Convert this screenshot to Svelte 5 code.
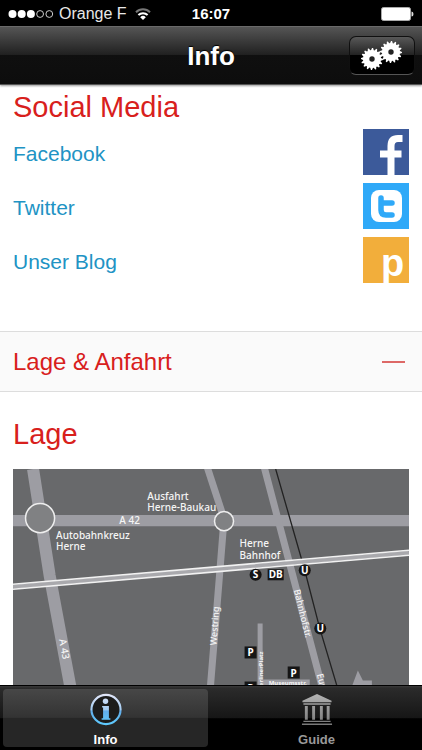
<script>
	let open = true;
	let activeTab = "info";

	const links = [
		{ id: "facebook", label: "Facebook" },
		{ id: "twitter", label: "Twitter" },
		{ id: "blog", label: "Unser Blog" }
	];

	const gears = [
		{ x: 12, y: 19 },
		{ x: 31, y: 12 }
	];

	// outline of a cog with the given number of teeth
	function gearPoints(cx, cy, teeth = 16) {
		let points = [];
		for (let i = 0; i < teeth * 4; i++) {
			const r = i % 4 < 2 ? 11 : 9;
			const a = (i / (teeth * 4)) * Math.PI * 2;
			points.push((cx + r * Math.cos(a)).toFixed(2) + "," + (cy + r * Math.sin(a)).toFixed(2));
		}
		return points.join(" ");
	}
</script>

<div class="app">
	<div class="status">
		<div class="carrier">
			<svg width="46" height="10" viewBox="0 0 46 10" aria-hidden="true">
				{#each [0, 1, 2, 3, 4] as n}
					<circle cx={4.5 + n * 9.2} cy="5" r={n < 3 ? 4 : 3.4} fill={n < 3 ? "#fff" : "none"} stroke={n < 3 ? "none" : "#ccc"} />
				{/each}
			</svg>
			<span>Orange F</span>
			<svg width="16" height="12" viewBox="0 0 16 12" fill="none" stroke-width="2" aria-hidden="true">
				<path d="M1 4.2a10 10 0 0 1 14 0" stroke="#777" />
				<path d="M3.4 7a6.6 6.6 0 0 1 9.2 0" stroke="#fff" />
				<path d="M8 12L5.2 9.2a4 4 0 0 1 5.6 0z" fill="#fff" />
			</svg>
		</div>
		<time>16:07</time>
		<svg class="battery" width="33" height="14" viewBox="0 0 33 14" aria-label="Batterie">
			<rect x="0.5" y="0.5" width="29" height="13" rx="2" fill="#fff" stroke="#aaa" />
			<path d="M30.5 4.5q2 0 2 2.5t-2 2.5z" fill="#ddd" />
		</svg>
	</div>

	<header>
		<h1>Info</h1>
		<button class="settings" aria-label="Einstellungen">
			<svg width="45" height="32" viewBox="0 0 45 32" aria-hidden="true">
				{#each gears as gear}
					<polygon points={gearPoints(gear.x, gear.y)} fill="#fff" />
					<circle cx={gear.x} cy={gear.y} r="2.7" fill="#222" />
				{/each}
			</svg>
		</button>
	</header>

	<main>
		<section class="social">
			<h2>Social Media</h2>
			<ul>
				{#each links as link (link.id)}
					<li>
						<a href="#{link.id}">
							<span>{link.label}</span>
							{#if link.id === "facebook"}
								<svg viewBox="0 0 46 46" aria-hidden="true">
									<rect width="46" height="46" fill="#3c5a9a" />
									<path d="M28 46V17Q28 9.500 35 9.500H39.500M17 25H38.500" fill="none" stroke="#fff" stroke-width="7" />
								</svg>
							{:else if link.id === "twitter"}
								<svg viewBox="0 0 46 46" aria-hidden="true">
									<rect width="46" height="46" fill="#2fa9f8" />
									<rect x="8" y="7" width="31" height="32" rx="8" fill="#fff" />
									<path d="M18 15V27Q18 32 23 32H29M18 20H29" fill="none" stroke="#2fa9f8" stroke-width="5.500" stroke-linecap="round" stroke-linejoin="round" />
								</svg>
							{:else}
								<svg viewBox="0 0 46 46" aria-hidden="true">
									<rect width="46" height="46" fill="#f2ae3b" />
									<text class="blog-letter" x="18" y="39">p</text>
								</svg>
							{/if}
						</a>
					</li>
				{/each}
			</ul>
		</section>

		<button class="toggle" aria-expanded={open} on:click={() => (open = !open)}>
			<span>Lage &amp; Anfahrt</span>
			<span class="sign" class:closed={!open}></span>
		</button>

		{#if open}
			<section class="location">
				<h2>Lage</h2>
				<svg class="map" viewBox="0 0 395 300" role="img" aria-label="Lageplan">
					<rect width="395" height="300" fill="#68696b" />

					<!-- roads -->
					<g fill="none" stroke="#9d9da3">
						<path d="M0 51.500H395" stroke-width="11" />
						<path d="M20 0L36.500 106L57 216L72 300" stroke-width="12" />
						<path d="M193 -4L210 48" stroke-width="7" />
						<path d="M210 56L206 106L197 216L191 300" stroke-width="7" />
						<path d="M250 -4L279 106L308 216L330 300" stroke-width="7" />
						<path d="M246.500 154V300" stroke-width="5" />
						<path d="M245 213H296" stroke-width="6" />
					</g>
					<path d="M338 217L344 201L349 211H358V217z" fill="#9d9da3" />

					<!-- underground line -->
					<path d="M262 0L291 101L306 159L323 216L348 300" fill="none" stroke="#222" stroke-width="1.300" />

					<!-- railway -->
					<path d="M0 117.500L395 83.500" stroke="#a9a9ad" stroke-width="4" />
					<path d="M0 115L395 81M0 120L395 86" stroke="#f2f2f2" stroke-width="1.600" />

					<g fill="#808183" stroke="#eee" stroke-width="1.500">
						<circle cx="27" cy="49" r="14.500" />
						<circle cx="210.500" cy="52" r="9.500" />
					</g>

					<g class="stops">
						<circle cx="242" cy="105.500" r="6" />
						<circle cx="291" cy="101" r="6" />
						<circle cx="306.500" cy="159" r="6" />
						<rect x="254" y="100" width="16" height="11" />
						<rect x="231" y="177" width="12" height="12" />
						<rect x="274" y="197" width="12" height="12" />
						<rect x="231" y="212" width="12" height="12" />
					</g>
					<g class="letters">
						<text x="242" y="109">S</text>
						<text x="291" y="105">U</text>
						<text x="306.500" y="163">U</text>
						<text x="262" y="109">DB</text>
						<text x="237" y="187">P</text>
						<text x="280" y="207">P</text>
						<text x="237" y="222">P</text>
					</g>

					<g class="names">
						<text x="134" y="31">Ausfahrt</text>
						<text x="134" y="42">Herne-Baukau</text>
						<text x="106" y="55">A 42</text>
						<text x="43" y="70">Autobahnkreuz</text>
						<text x="43" y="81">Herne</text>
						<text x="226" y="78">Herne</text>
						<text x="226" y="90">Bahnhof</text>
						<text transform="translate(46 170) rotate(80)">A 43</text>
					</g>
					<g class="streets">
						<text transform="translate(203 176) rotate(-86)">Westring</text>
						<text transform="translate(280 121) rotate(76)">Bahnhofstr.</text>
						<text transform="translate(303 205) rotate(76)">Europaplatz</text>
					</g>
					<g class="lanes">
						<text x="255" y="215">Museumsstr.</text>
						<text transform="translate(249 182) rotate(-90)" text-anchor="end">BerlinerPlatz</text>
					</g>
				</svg>
			</section>
		{/if}
	</main>

	<nav>
		<button class:active={activeTab === "info"} on:click={() => (activeTab = "info")}>
			<svg width="34" height="34" viewBox="0 0 34 34" aria-hidden="true">
				<defs>
					<linearGradient id="blue" gradientUnits="userSpaceOnUse" x1="0" y1="1" x2="0" y2="33">
						<stop offset="0" stop-color="#e3e6f8" />
						<stop offset="0.500" stop-color="#a5cdf3" />
						<stop offset="0.550" stop-color="#62adea" />
						<stop offset="1" stop-color="#5ecbff" />
					</linearGradient>
				</defs>
				<circle cx="17" cy="17" r="15" fill="#1c1c1c" stroke="url(#blue)" stroke-width="2.200" />
				<circle cx="16.500" cy="8.500" r="2.800" fill="url(#blue)" />
				<path d="M13 13.500H20V26H21.500V27.500H12.500V26H14V15H13z" fill="url(#blue)" />
			</svg>
			<span>Info</span>
		</button>
		<button class:active={activeTab === "guide"} on:click={() => (activeTab = "guide")}>
			<svg width="34" height="34" viewBox="0 0 34 34" aria-hidden="true">
				<defs>
					<linearGradient id="silver" gradientUnits="userSpaceOnUse" x1="0" y1="0" x2="0" y2="34">
						<stop offset="0" stop-color="#b5b5b5" />
						<stop offset="1" stop-color="#777" />
					</linearGradient>
				</defs>
				<path fill="url(#silver)" d="M17 1L32 8V9.500H2V8zM3 10.500H31V12H3zM4.500 13.500H7.500V27.500H4.500zM12 13.500H15V27.500H12zM20 13.500H23V27.500H20zM27 13.500H30V27.500H27zM3 28.500H31V30H3zM1.500 31.500H32.500V33H1.500z" />
			</svg>
			<span>Guide</span>
		</button>
	</nav>
</div>

<style>
	:global(body) {
		margin: 0;
		background: #fff;
	}
	.app {
		display: flex;
		flex-direction: column;
		height: 100vh;
		font-family: "Liberation Sans", Arial, sans-serif;
	}
	button {
		border: 0;
		margin: 0;
		padding: 0;
		font-family: inherit;
		cursor: pointer;
	}

	.status {
		display: grid;
		grid-template-columns: 1fr auto 1fr;
		align-items: center;
		height: 26px;
		padding: 1px 8px 0;
		box-sizing: border-box;
		background: #000;
		color: #fff;
		font-size: 16px;
	}
	.carrier {
		display: flex;
		align-items: center;
		gap: 8px;
	}
	.carrier span {
		margin-left: -3px;
		color: #e8e8e8;
	}
	time {
		font-size: 15px;
		font-weight: bold;
	}
	.battery {
		justify-self: end;
	}

	header {
		display: grid;
		grid-template-columns: 1fr auto 1fr;
		align-items: center;
		height: 59px;
		padding: 0 7px;
		box-sizing: border-box;
		border-top: 1px solid #6a6a6a;
		border-bottom: 1px solid #555;
		background: linear-gradient(#555, #202020 49%, #0f0f0f 50%, #0d0d0d);
		box-shadow: 0 1px 2px rgba(0, 0, 0, 0.4);
		z-index: 1;
	}
	h1 {
		grid-column: 2;
		margin: 0;
		color: #fff;
		font-size: 26px;
		line-height: 30px;
		text-shadow: 0 -1px 1px #000;
	}
	.settings {
		display: flex;
		align-items: center;
		justify-content: center;
		justify-self: end;
		width: 66px;
		height: 39px;
		border: 1px solid #101010;
		border-bottom-color: #555;
		border-radius: 7px;
		background: linear-gradient(#585858, #222 49%, #000 50%, #000);
	}

	main {
		flex: 1;
		min-height: 0;
		overflow-y: auto;
		scrollbar-width: none;
	}
	h2 {
		margin: 0;
		color: #d8201c;
		font-size: 29px;
		line-height: 34px;
		font-weight: normal;
	}
	.social {
		padding: 5px 13px 48px;
	}
	ul {
		display: flex;
		flex-direction: column;
		gap: 8px;
		list-style: none;
		margin: 5px 0 0;
		padding: 0;
	}
	a {
		display: flex;
		justify-content: space-between;
		align-items: center;
		color: #2193c4;
		font-size: 21px;
		line-height: 24px;
		text-decoration: none;
	}
	a span {
		padding-top: 4px;
	}
	a svg {
		width: 46px;
		height: 46px;
	}
	.blog-letter {
		fill: #fff;
		font-size: 38px;
		font-weight: bold;
	}

	.toggle {
		display: flex;
		justify-content: space-between;
		align-items: center;
		width: 100%;
		height: 61px;
		padding: 0 17px 0 13px;
		border-top: 1px solid #ddd;
		border-bottom: 1px solid #ddd;
		background: #fafafa;
		color: #d8201c;
		font-size: 24px;
	}
	.sign {
		width: 23px;
		height: 2px;
		background: #dd6866;
	}
	.closed {
		height: 23px;
		width: 2px;
	}

	.location {
		padding: 25px 13px 40px;
	}
	.map {
		display: block;
		width: 100%;
		margin-top: 18px;
	}
	.map text {
		font-family: "Noto Sans", "Open Sans", sans-serif;
	}
	.names, .streets, .lanes {
		fill: #f5f5f5;
		font-size: 10px;
		font-weight: 500;
	}
	.streets {
		font-size: 9px;
	}
	.lanes {
		font-size: 6px;
		font-weight: bold;
	}
	.stops {
		fill: #151515;
	}
	.letters {
		fill: #fff;
		font-size: 10px;
		font-weight: bold;
		text-anchor: middle;
	}

	nav {
		display: flex;
		gap: 6px;
		height: 65px;
		padding: 3px;
		box-sizing: border-box;
		border-top: 1px solid #000;
		background: linear-gradient(#3a3a3a, #2b2b2b 2px, #161616 50%, #000 51%);
	}
	nav button {
		flex: 1;
		display: flex;
		flex-direction: column;
		align-items: center;
		gap: 6px;
		padding-top: 4px;
		border-radius: 4px;
		background: none;
		color: #999;
		font-size: 13px;
		line-height: 15px;
		font-weight: bold;
	}
	nav .active {
		background: linear-gradient(#474747, #333 49%, #262626 50%);
		color: #fff;
	}
</style>
